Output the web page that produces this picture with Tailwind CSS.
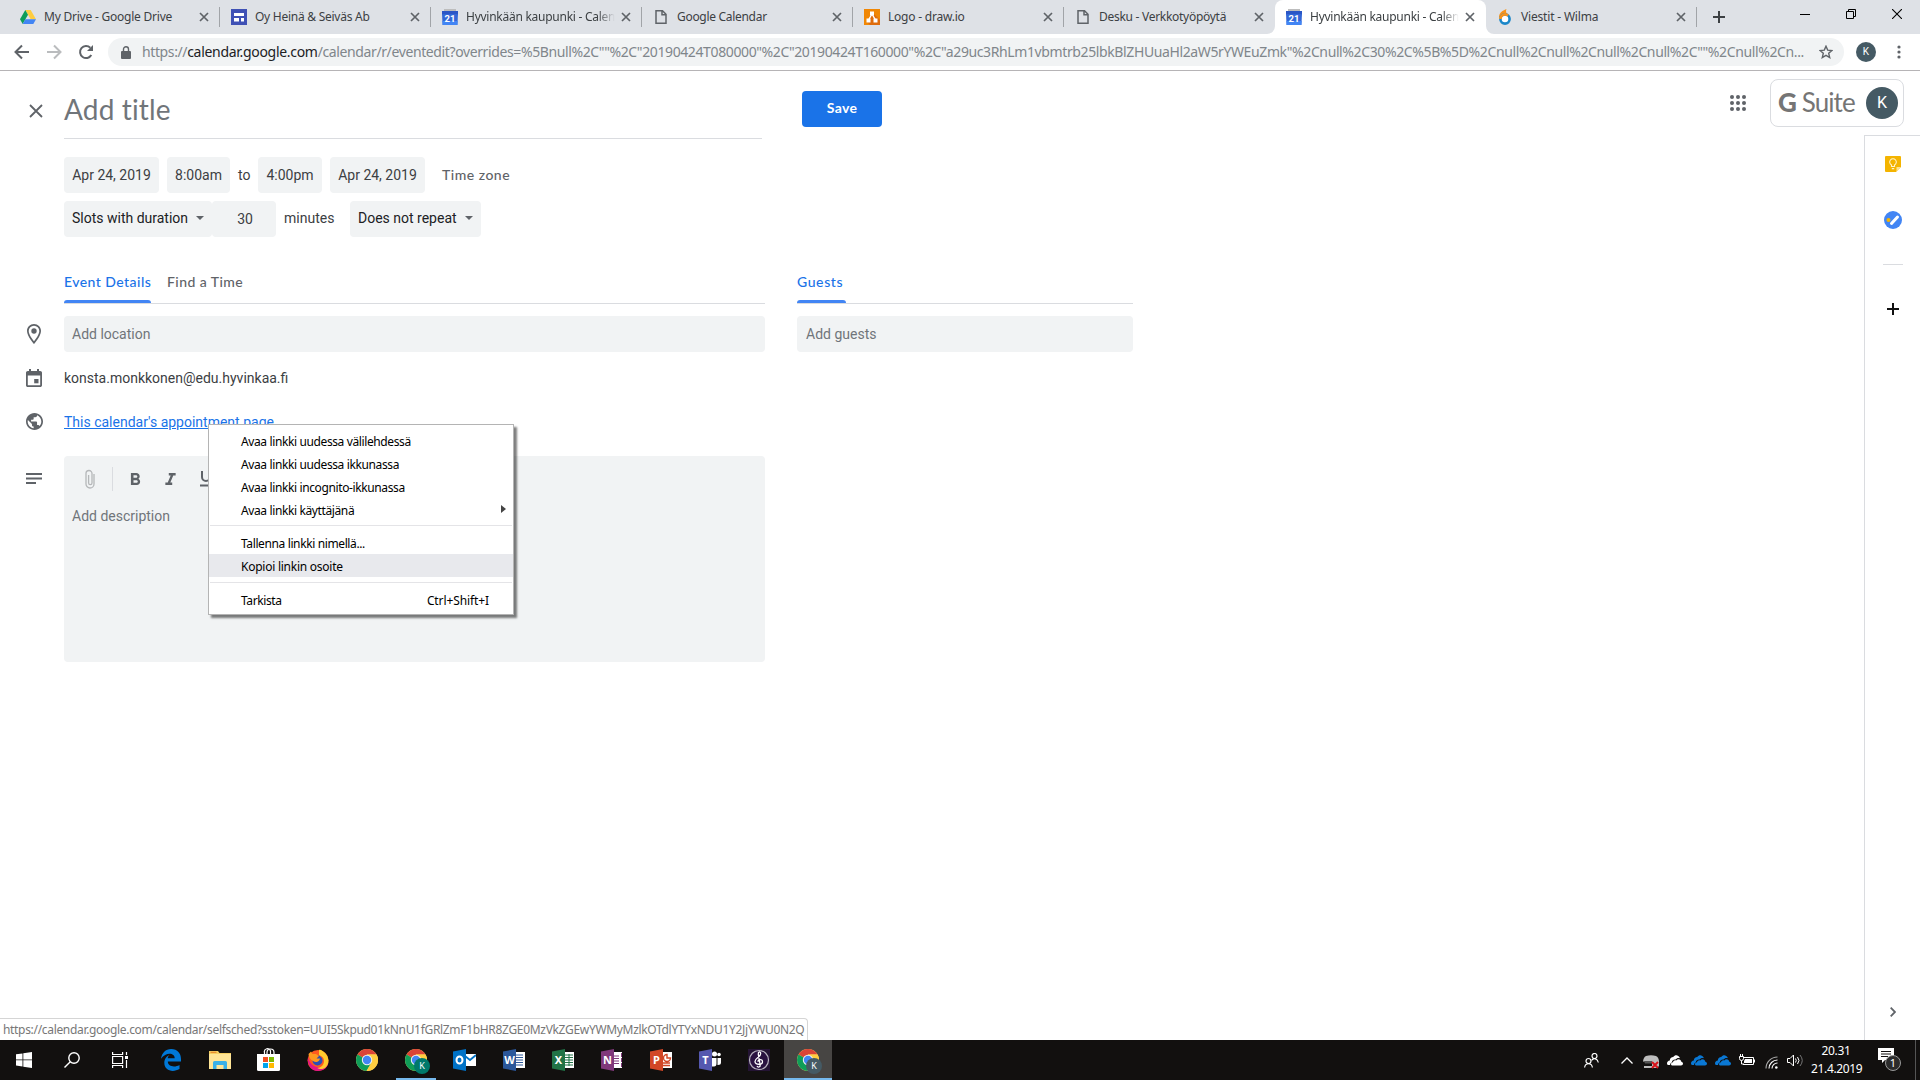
<!DOCTYPE html>
<html lang="fi">
<head>
  <meta charset="utf-8">
  <title>Hyvinkään kaupunki - Calendar</title>
  <script src="https://cdn.jsdelivr.net/npm/@tailwindcss/browser@4"></script>
</head>
<body class="h-[1080px] w-[1920px] overflow-hidden bg-white font-['Roboto','Liberation_Sans',sans-serif] text-sm text-[#3c4043]">
<!-- shared symbols -->
<svg class="hidden">
  <symbol id="x" viewBox="0 0 10 10"><path d="M1 1l8 8M9 1L1 9" fill="none" stroke="currentColor" stroke-width="1.7"/></symbol>
  <symbol id="cal" viewBox="0 0 16 16"><path d="M2 0h12v3H2z" fill="#bdbdbd"/><path d="M0 2h16v4H0z" fill="#2a56c6"/><path d="M0 5h16l-.6 11H.6z" fill="#3367d6"/><path d="M.4 12h15.2l-.2 4H.6z" fill="#4285f4"/><text x="8" y="12.6" text-anchor="middle" font-family="Roboto" font-weight="700" font-size="9.5" fill="#fff">21</text></symbol>
  <symbol id="page" viewBox="0 0 16 16"><path d="M3 1.700h6.500L13 5.200v9.100H3zM9 1.700v4h4" fill="none" stroke="#5f6368" stroke-width="1.500"/></symbol>
  <symbol id="chrome" viewBox="0 0 22 22"><circle cx="11" cy="11" r="11" fill="#fdd663"/><path d="M11 11L1.500 5.500A11 11 0 0 1 20.500 5.500H11z" fill="#db4437"/><path d="M11 11L1.500 5.500A11 11 0 0 0 10.500 22l5-8.500z" fill="#0f9d58"/><path d="M11 5.500h9.500A11 11 0 0 1 10.500 22l5.200-8.700z" fill="#ffcd40"/><circle cx="11" cy="11" r="5.200" fill="#f1f1f1"/><circle cx="11" cy="11" r="4.200" fill="#4285f4"/></symbol>
  <symbol id="cloud" viewBox="0 0 16 11"><path d="M0 8.500C0 6.800 1.200 5.600 2.800 5.500 2.800 3.300 4.300 2 6.300 2 7.300.4 9.500-.2 11.200.9c1 .6 1.500 1.500 1.700 2.400C11 2.700 9.500 3.400 8.600 4.600 6.700 4.300 5 5.500 4.800 7.400 3.600 7.800 3 8.800 3.100 10 1.300 10.400 0 9.800 0 8.500z"/><path d="M4 9.300c0-1.300.8-2 2-2.100.2-1.500 1.700-2.300 3.200-1.800 1.700-2 4.900-1.300 5.100 1.300 1.100.2 1.700.9 1.700 1.900 0 1.200-.8 1.900-2 1.900H5.800C4.800 10.500 4 10.100 4 9.300z"/></symbol>
</svg>

<!-- tab strip -->
<header class="flex h-[34px] bg-[#dee1e6] pl-[9px] font-['Noto_Sans',sans-serif] text-xs text-[#3c4043]">
  <div class="flex h-[34px] w-[211px] items-center pl-[11px]">
    <svg class="size-4" viewBox="0 0 16 16"><path d="M5.300 1h5.400l5.300 9.300h-5.300z" fill="#ffcd40"/><path d="M5.300 1L8 5.700 2.700 15 0 10.300z" fill="#0f9d58"/><path d="M5.400 10.300H16L13.300 15H2.700z" fill="#4285f4"/></svg>
    <span class="ml-2 w-[155px] whitespace-nowrap tracking-[-0.22px]">My Drive - Google Drive</span>
    <svg class="size-[10px] text-[#5f6368]"><use href="#x"/></svg>
    <i class="ml-[10px] h-5 w-px bg-[#a1a4a8]"></i>
  </div>
  <div class="flex h-[34px] w-[211px] items-center pl-[11px]">
    <svg class="size-4" viewBox="0 0 16 16"><path d="M0 0h16v16H0z" fill="#3f51b5"/><path d="M3 4h10v3H3zM3 9h5v3.500H3zM10 9h3v3.500h-3z" fill="#fff"/></svg>
    <span class="ml-2 w-[155px] whitespace-nowrap tracking-[-0.26px]">Oy Heinä &amp; Seiväs Ab</span>
    <svg class="size-[10px] text-[#5f6368]"><use href="#x"/></svg>
    <i class="ml-[10px] h-5 w-px bg-[#a1a4a8]"></i>
  </div>
  <div class="flex h-[34px] w-[211px] items-center pl-[11px]">
    <svg class="size-4"><use href="#cal"/></svg>
    <span class="ml-2 w-[155px] whitespace-nowrap tracking-[-0.26px]"><span class="mask-r-from-88%">Hyvinkään kaupunki - Calen</span></span>
    <svg class="size-[10px] text-[#5f6368]"><use href="#x"/></svg>
    <i class="ml-[10px] h-5 w-px bg-[#a1a4a8]"></i>
  </div>
  <div class="flex h-[34px] w-[211px] items-center pl-[11px]">
    <svg class="size-4"><use href="#page"/></svg>
    <span class="ml-2 w-[155px] whitespace-nowrap tracking-[-0.3px]">Google Calendar</span>
    <svg class="size-[10px] text-[#5f6368]"><use href="#x"/></svg>
    <i class="ml-[10px] h-5 w-px bg-[#a1a4a8]"></i>
  </div>
  <div class="flex h-[34px] w-[211px] items-center pl-[11px]">
    <svg class="size-4" viewBox="0 0 16 16"><path d="M0 0h16v16H0z" fill="#f08705"/><path d="M8 3l8 8v5H6l-3-3z" fill="#df6c0c"/><path d="M8 5L4.500 11M8 5l3.500 6" stroke="#fff" stroke-width="1.400"/><path d="M6 2.500h4v4H6zM2.500 9.500h4v4h-4zM9.500 9.500h4v4h-4z" fill="#fff"/></svg>
    <span class="ml-2 w-[155px] whitespace-nowrap tracking-[-0.22px]">Logo - draw.io</span>
    <svg class="size-[10px] text-[#5f6368]"><use href="#x"/></svg>
    <i class="ml-[10px] h-5 w-px bg-[#a1a4a8]"></i>
  </div>
  <div class="flex h-[34px] w-[211px] items-center pl-[11px]">
    <svg class="size-4"><use href="#page"/></svg>
    <span class="ml-2 w-[155px] whitespace-nowrap tracking-[-0.28px]">Desku - Verkkotyöpöytä</span>
    <svg class="size-[10px] text-[#5f6368]"><use href="#x"/></svg>
  </div>
  <div class="relative flex h-[34px] w-[211px] items-center rounded-t-lg bg-white pl-[11px]">
    <svg class="absolute bottom-0 -left-2 size-2" viewBox="0 0 8 8"><path d="M8 0v8H0a8 8 0 0 0 8-8z" fill="#fff"/></svg>
    <svg class="absolute -right-2 bottom-0 size-2" viewBox="0 0 8 8"><path d="M0 0v8h8a8 8 0 0 1-8-8z" fill="#fff"/></svg>
    <svg class="size-4"><use href="#cal"/></svg>
    <span class="ml-2 w-[155px] whitespace-nowrap tracking-[-0.26px]"><span class="mask-r-from-88%">Hyvinkään kaupunki - Calen</span></span>
    <svg class="size-[10px] text-[#5f6368]"><use href="#x"/></svg>
  </div>
  <div class="flex h-[34px] w-[211px] items-center pl-[11px]">
    <svg class="size-4" viewBox="0 0 16 16"><path d="M9.500 0C5 1.500 2 4.500 2 8l2 .5C5 6 8 4.500 11 5.500 9 4.500 8.500 2 9.500 0z" fill="#f7941e"/><circle cx="8" cy="10" r="4.600" fill="#fff" stroke="#1b87c9" stroke-width="2.600"/><path d="M3.400 10A4.600 4.600 0 0 1 11 6.500" fill="none" stroke="#f7941e" stroke-width="2.600"/></svg>
    <span class="ml-2 w-[155px] whitespace-nowrap tracking-[-0.18px]">Viestit - Wilma</span>
    <svg class="size-[10px] text-[#5f6368]"><use href="#x"/></svg>
    <i class="ml-[10px] h-5 w-px bg-[#a1a4a8]"></i>
  </div>
  <svg class="mt-[11px] ml-[16px] size-3" viewBox="0 0 12 12"><path d="M6 0v12M0 6h12" stroke="#3c4043" stroke-width="2"/></svg>
  <div class="mr-[18px] ml-auto flex items-start gap-9 pt-[9px]">
    <svg class="size-[10px]" viewBox="0 0 10 10"><path d="M0 5.500h10" stroke="#000"/></svg>
    <svg class="size-[10px]" viewBox="0 0 10 10"><path d="M.5 2.500h7v7h-7zM2.500 2.500v-2h7v7h-2" fill="none" stroke="#000"/></svg>
    <svg class="size-[10px]" viewBox="0 0 10 10"><path d="M0 0l10 10M10 0L0 10" stroke="#000" stroke-width="1.100"/></svg>
  </div>
</header>

<!-- toolbar -->
<nav class="flex h-[37px] items-center border-b border-[#b6b4b6] bg-white pl-[14px] text-[#5f6368]">
  <svg class="size-4" viewBox="0 0 16 16"><path d="M15 8H2M8 1.500L1.500 8 8 14.500" fill="none" stroke="currentColor" stroke-width="2"/></svg>
  <svg class="ml-4 size-4 text-[#babcbe]" viewBox="0 0 16 16"><path d="M1 8h13M8 1.500L14.500 8 8 14.500" fill="none" stroke="currentColor" stroke-width="2"/></svg>
  <svg class="ml-4 size-4" viewBox="0 0 16 16"><path d="M13.300 11A6 6 0 1 1 12.300 3.800" fill="none" stroke="currentColor" stroke-width="2"/><path d="M15 1v6H9z" fill="currentColor"/></svg>
  <div class="ml-[14px] flex h-7 w-[1736px] items-center rounded-full bg-[#f1f3f4] pl-[13px]">
    <svg class="h-[13px] w-[10px]" viewBox="0 0 10 13"><path d="M1 5h8q1 0 1 1v6q0 1-1 1H1q-1 0-1-1V6q0-1 1-1z" fill="currentColor"/><path d="M2.500 5.500V3.200a2.500 2.500 0 0 1 5 0v2.300" fill="none" stroke="currentColor" stroke-width="1.400"/></svg>
    <span class="ml-[11px] w-[1664px] whitespace-nowrap pb-px font-['Noto_Sans',sans-serif] text-sm tracking-[-0.385px] text-[#80868b]">https://<b class="font-normal tracking-[-0.3px] text-[#202124]">calendar.google.com</b>/calendar/r/eventedit?overrides=%5Bnull%2C""%2C"20190424T080000"%2C"20190424T160000"%2C"a29uc3RhLm1vbmtrb25lbkBlZHUuaHl2aW5rYWEuZmk"%2Cnull%2C30%2C%5B%5D%2Cnull%2Cnull%2Cnull%2Cnull%2C""%2Cnull%2Cn...</span>
    <svg class="ml-[13px] size-[14px]" viewBox="0 0 14 14"><path d="M7 1.200l1.700 3.900 4.200.4-3.200 2.800 1 4.200L7 10.300l-3.700 2.200 1-4.200L1.100 5.500l4.200-.4z" fill="none" stroke="currentColor" stroke-width="1.400"/></svg>
  </div>
  <span class="ml-3 flex size-5 items-center justify-center rounded-full bg-[#455a64] text-[10px] text-white">K</span>
  <svg class="ml-[21px] h-[14px] w-1" viewBox="0 0 4 14" fill="currentColor"><circle cx="2" cy="2" r="1.600"/><circle cx="2" cy="7" r="1.600"/><circle cx="2" cy="12" r="1.600"/></svg>
</nav>

<!-- page -->
<main class="flex h-[969px] pt-px">
  <section class="w-[765px] shrink-0">
    <div class="flex h-[67px] pl-[29px]">
      <svg class="mt-8 size-[14px]" viewBox="0 0 14 14"><path d="M1 1l12 12M13 1L1 13" stroke="#5f6368" stroke-width="1.800"/></svg>
      <div class="ml-[21px] h-[67px] w-[698px] border-b border-[#dadce0] pt-4 font-['Lato','Open_Sans',sans-serif] text-[28px] leading-[42px] tracking-[0.15px] text-[#70757a]">Add title</div>
    </div>
    <div class="mt-[18px] flex h-9 items-center pl-16 leading-9 whitespace-nowrap">
      <span class="w-[95px] rounded bg-[#f1f3f4] text-center">Apr 24, 2019</span>
      <span class="ml-2 w-[63px] rounded bg-[#f1f3f4] text-center">8:00am</span>
      <span class="w-7 pl-2">to</span>
      <span class="w-16 rounded bg-[#f1f3f4] text-center">4:00pm</span>
      <span class="ml-2 w-[95px] rounded bg-[#f1f3f4] text-center">Apr 24, 2019</span>
      <span class="ml-[17px] font-['Lato',sans-serif] font-medium tracking-[0.5px] text-[#5f6368]">Time zone</span>
    </div>
    <div class="mt-2 flex h-9 pl-16 leading-[34px] whitespace-nowrap">
      <span class="flex w-[148px] rounded bg-[#f1f3f4] pl-2 text-[#202124]">Slots with duration<svg class="mt-[15px] ml-2 h-1 w-2" viewBox="0 0 8 4"><path d="M0 0h8L4 4z" fill="#5f6368"/></svg></span>
      <span class="w-16 rounded bg-[#f1f3f4] pt-px pl-0.5 text-center">30</span>
      <span class="ml-2 w-[66px]">minutes</span>
      <span class="flex w-[131px] rounded bg-[#f1f3f4] pl-2 text-[#202124]">Does not repeat<svg class="mt-[15px] ml-2 h-1 w-2" viewBox="0 0 8 4"><path d="M0 0h8L4 4z" fill="#5f6368"/></svg></span>
    </div>
    <div class="mt-8 ml-16 flex h-[35px] border-b border-[#dadce0] font-['Lato',sans-serif] font-medium leading-[25px] tracking-[0.45px] text-[#5f6368]">
      <span class="relative w-[87px] whitespace-nowrap text-[#1a73e8]">Event Details<i class="absolute bottom-0 left-0 h-[3px] w-full rounded-t-sm bg-[#4285f4]"></i></span>
      <span class="ml-4">Find a Time</span>
    </div>
    <div class="mt-3 flex h-9 items-center pl-[27px]">
      <svg class="h-5 w-[14px]" viewBox="5 2 14 20"><path d="M12 2C8.130 2 5 5.130 5 9c0 5.250 7 13 7 13s7-7.750 7-13c0-3.870-3.130-7-7-7zm0 17.300C10 16.800 6.700 12.200 6.700 9a5.300 5.300 0 0 1 10.600 0c0 3.200-3.300 7.800-5.300 10.300z" fill="#5f6368"/><circle cx="12" cy="9" r="2.700" fill="#5f6368"/></svg>
      <span class="ml-[23px] h-9 w-[701px] rounded bg-[#f1f3f4] pl-2 leading-9 text-[#70757a]">Add location</span>
    </div>
    <div class="mt-2 flex h-9 items-center pl-[26px]">
      <svg class="mb-px h-[18px] w-4" viewBox="0 0 16 18"><path d="M14.200 2H13V0h-2v2H5V0H3v2H1.800C.8 2 0 2.800 0 3.800v12.400C0 17.200.8 18 1.800 18h12.400c1 0 1.800-.8 1.800-1.800V3.800c0-1-.8-1.800-1.800-1.800zm0 14.200H1.800V6.500h12.400z" fill="#5f6368"/><path d="M8.200 10h4.300v4.300H8.200z" fill="#5f6368"/></svg>
      <span class="ml-[22px]">konsta.monkkonen@edu.hyvinkaa.fi</span>
    </div>
    <div class="mt-2 flex h-9 items-center pl-[26px]">
      <svg class="mb-px size-[17px]" viewBox="2 2 20 20"><path d="M12 2C6.480 2 2 6.480 2 12s4.480 10 10 10 10-4.480 10-10S17.520 2 12 2zm-1 17.930c-3.950-.49-7-3.850-7-7.930 0-.62.08-1.210.21-1.790L9 15v1c0 1.100.9 2 2 2v1.930zm6.900-2.540c-.26-.81-1-1.390-1.900-1.390h-1v-3c0-.55-.45-1-1-1H8v-2h2c.55 0 1-.45 1-1V7h2c1.100 0 2-.9 2-2v-.41c2.930 1.190 5 4.060 5 7.410 0 2.080-.8 3.970-2.100 5.390z" fill="#5f6368"/></svg>
      <a class="ml-[21px] text-[#1a73e8] underline">This calendar's appointment page</a>
    </div>
    <div class="mt-4 flex pl-[26px]">
      <svg class="mt-[17px] h-[11px] w-4" viewBox="0 0 16 11"><path d="M0 1h16M0 5.500h16M0 10h10" stroke="#5f6368" stroke-width="1.800"/></svg>
      <div class="ml-[22px] h-[206px] w-[701px] rounded bg-[#f1f3f4] text-[#70757a]">
        <div class="flex h-[45px] items-center pl-[21px]">
          <svg class="h-5 w-[10px]" viewBox="0 0 10 20"><path d="M9 5v10a4 4 0 0 1-8 0V4.500a3 3 0 0 1 6 0V14a1.700 1.700 0 0 1-3.400 0V6" fill="none" stroke="#b5b7b9" stroke-width="1.300"/></svg>
          <i class="ml-[17px] h-6 w-px bg-[#dadce0]"></i>
          <svg class="ml-[17px] h-3 w-[11px]" viewBox="7 4 10.700 14"><path d="M15.600 10.790c.97-.67 1.650-1.770 1.650-2.790 0-2.260-1.750-4-4-4H7v14h7.040c2.090 0 3.710-1.700 3.710-3.790 0-1.520-.86-2.820-2.150-3.420zM10 6.500h3c.83 0 1.500.67 1.500 1.500s-.67 1.500-1.500 1.500h-3v-3zm3.500 9H10v-3h3.500c.83 0 1.500.67 1.500 1.500s-.67 1.500-1.500 1.500z" fill="#5f6368"/></svg>
          <svg class="ml-6 h-3 w-[11px]" viewBox="6 4 12 14"><path d="M10 4v3h2.210l-3.420 8H6v3h8v-3h-2.210l3.420-8H18V4z" fill="#5f6368"/></svg>
          <svg class="ml-6 h-4 w-3" viewBox="0 0 12 16"><path d="M2 0v6a4 4 0 0 0 8 0V0M0 14.500h12" fill="none" stroke="#5f6368" stroke-width="2"/></svg>
        </div>
        <div class="pt-[3px] pl-2 leading-6">Add description</div>
      </div>
    </div>
  </section>

  <section class="w-[368px] shrink-0 pl-8">
    <button class="mt-[19px] ml-[5px] block h-9 w-20 rounded bg-[#1a73e8] pb-0.5 font-['Lato',sans-serif] font-bold tracking-[0.3px] text-white">Save</button>
    <div class="mt-[142px] flex h-[35px] border-b border-[#dadce0] font-['Lato',sans-serif] font-medium leading-[25px] tracking-[0.6px] text-[#1a73e8]">
      <span class="relative w-[49px]">Guests<i class="absolute bottom-0 left-0 h-[3px] w-full rounded-t-sm bg-[#4285f4]"></i></span>
    </div>
    <div class="mt-3 h-9 rounded bg-[#f1f3f4] pl-[9px] leading-9 text-[#70757a]">Add guests</div>
  </section>

  <aside class="ml-auto flex w-[190px] flex-col">
    <div class="flex h-[63px] shrink-0 items-start pt-[7px]">
      <svg class="mt-4 size-4" viewBox="0 0 16 16" fill="#5f6368"><circle cx="2" cy="2" r="2"/><circle cx="8" cy="2" r="2"/><circle cx="14" cy="2" r="2"/><circle cx="2" cy="8" r="2"/><circle cx="8" cy="8" r="2"/><circle cx="14" cy="8" r="2"/><circle cx="2" cy="14" r="2"/><circle cx="8" cy="14" r="2"/><circle cx="14" cy="14" r="2"/></svg>
      <div class="ml-6 flex h-12 w-[134px] items-center rounded-lg border border-[#dadce0] pl-[7px] font-['Lato',sans-serif] text-[26px] text-[#757575]">
        <span class="w-[80px] pb-px whitespace-nowrap tracking-[-0.9px]"><b class="font-black">G</b> Suite</span>
        <span class="ml-2 flex size-8 shrink-0 items-center justify-center rounded-full bg-[#455a64] font-['Roboto'] text-base text-white">K</span>
      </div>
    </div>
    <div class="ml-[134px] flex grow flex-col items-center border-t border-l border-[#dadce0]">
      <svg class="mt-5 size-4" viewBox="0 0 16 16"><path d="M1 0h14q1 0 1 1v10l-5 5H1q-1 0-1-1V1q0-1 1-1z" fill="#f4b400"/><path d="M16 11l-4.500 4.700V11z" fill="#fde293"/><path d="M6.500 10.500V9a3.300 3.300 0 1 1 3 0v1.500zM6.800 12.600h2.400" fill="none" stroke="#fff3d0" stroke-width="1.100"/></svg>
      <svg class="mt-[39px] size-[18px]" viewBox="0 0 18 18"><circle cx="9" cy="9" r="9" fill="#4285f4"/><circle cx="4.500" cy="9" r="2" fill="#f4b400"/><path d="M7.500 12.500l6-6.500" stroke="#fff" stroke-width="3" stroke-linecap="round"/></svg>
      <i class="mt-[35px] h-px w-5 bg-[#dadce0]"></i>
      <svg class="mt-[38px] size-3" viewBox="0 0 12 12"><path d="M6 0v12M0 6h12" stroke="#111" stroke-width="2"/></svg>
      <svg class="mt-auto mb-[23px] h-[10px] w-[6px]" viewBox="0 0 6 10"><path d="M.7.700L5 5 .7 9.300" fill="none" stroke="#5f6368" stroke-width="1.800"/></svg>
    </div>
  </aside>
</main>

<!-- link status bubble -->
<div class="absolute top-[1018px] left-0 h-[22px] w-[808px] rounded-tr border-t border-r border-[#d5d5d5] bg-white pl-[3px] font-['Noto_Sans',sans-serif] text-xs leading-[22px] tracking-[-0.32px] whitespace-nowrap text-[#777]">https://calendar.google.com/calendar/selfsched?sstoken=UUI5Skpud01kNnU1fGRlZmF1bHR8ZGE0MzVkZGEwYWMyMzlkOTdlYTYxNDU1Y2JjYWU0N2Q</div>

<!-- context menu -->
<div class="absolute top-[424px] left-[208px] h-[191px] w-[306px] border border-[#b4b4b4] bg-white pt-1 font-['Noto_Sans',sans-serif] text-xs leading-[25px] tracking-[-0.38px] text-black shadow-[3px_3px_2px_rgba(0,0,0,.5)]">
  <div class="h-[23px] pl-8">Avaa linkki uudessa välilehdessä</div>
  <div class="h-[23px] pl-8">Avaa linkki uudessa ikkunassa</div>
  <div class="h-[23px] pl-8">Avaa linkki incognito-ikkunassa</div>
  <div class="flex h-[23px] justify-between pr-[7px] pl-8">Avaa linkki käyttäjänä<svg class="mt-[7px] h-2 w-[5px]" viewBox="0 0 5 8"><path d="M0 0l5 4-5 4z" fill="#444"/></svg></div>
  <hr class="mx-px mt-1 mb-[5px] border-[#e4e4e7]">
  <div class="h-[23px] pl-8">Tallenna linkki nimellä...</div>
  <div class="h-[23px] bg-[#e8e9ed] pl-8 tracking-[-0.25px]">Kopioi linkin osoite</div>
  <hr class="mx-px mt-[5px] mb-[5px] border-[#e4e4e7]">
  <div class="flex h-[23px] justify-between pr-6 pl-8"><span>Tarkista</span><span class="tracking-[-0.1px]">Ctrl+Shift+I</span></div>
</div>

<!-- taskbar -->
<footer class="flex h-10 items-center bg-[#12100f] font-['Noto_Sans',sans-serif] text-white">
  <svg class="ml-4 size-4" viewBox="0 0 16 16" fill="#fff"><path d="M0 2.300L6.500 1.400v6.100H0zM7.300 1.300L16 0v7.500H7.300zM0 8.300h6.500v6.200L0 13.600zM7.300 8.300H16V16l-8.700-1.300z"/></svg>
  <svg class="ml-8 size-4" viewBox="0 0 16 16" fill="none" stroke="#fff" stroke-width="1.400"><circle cx="10" cy="6" r="5.200"/><path d="M6.300 9.700L.5 15.500"/></svg>
  <svg class="ml-8 size-4" viewBox="0 0 16 16" fill="none" stroke="#fff" stroke-width="1.200"><path d="M.6 0v2.500h10V0M.6 4.500h10v7H.6zM.6 16v-2.500h10V16M14.500 0v3M14.500 8v8"/><path d="M13 4h3v3h-3z" fill="#fff" stroke="none"/></svg>
  <svg class="ml-[33px] h-[22px] w-5" viewBox="0 0 20 22"><path d="M0 9.800C.8 4 4.500 0 10.200 0 16.500 0 20 4.500 20 10v2.500H6.800c.2 5 6.700 6.200 11.700 3.400v4.200C12 23.700 3.300 22 3.300 13.800 3.300 10 5.500 7.200 8.500 6 7.200 7 6.800 8.300 6.700 9.300h7C13.700 3.500 4.700 3 0 9.800z" fill="#0078d7"/></svg>
  <svg class="ml-[28px] h-[18px] w-[22px]" viewBox="0 0 22 18"><path d="M0 0h9l1.500 2H22v16H0z" fill="#f5cf62"/><path d="M0 3h22v15H0z" fill="#ffe596"/><path d="M1.500.8h6v1h-6z" fill="#e67e22"/><path d="M4 18v-6.500Q4 10 5.500 10h11Q18 10 18 11.500V18h-3.500v-4h-7v4z" fill="#39b1e7"/></svg>
  <svg class="mb-0.5 ml-[26px] h-[23px] w-[23px]" viewBox="0 0 23 23"><path d="M7.500 7V4.500a3 3 0 0 1 6-1.500V7M10 7V4.500a3 3 0 0 1 7 0V7" fill="none" stroke="#fff" stroke-width="1.200"/><path d="M0 6h23v15.500Q23 23 21.500 23h-20Q0 23 0 21.500z" fill="#fff"/><path d="M6 9h5v5H6z" fill="#f25022"/><path d="M12 9h5v5h-5z" fill="#7fba00"/><path d="M6 15h5v5H6z" fill="#00a4ef"/><path d="M12 15h5v5h-5z" fill="#ffb900"/></svg>
  <svg class="ml-[27px] size-[22px]" viewBox="0 0 22 22"><circle cx="11" cy="11.500" r="10.500" fill="#ff5a1f"/><path d="M1 8C0 14 3 22 11 22c6 0 10-4 10.500-9C19 18 14 19.500 10 18 5 17 2 13 1 8z" fill="#e31587"/><path d="M12 1c2-1 3 1 5 2 5 4 6 11 2 15-3 3-7 2-9 1 4 0 7-3 7-7s-3-5-5-6z" fill="#ffcb2d"/><circle cx="10.500" cy="11.500" r="5" fill="#2d4fb5"/><path d="M1.500 5L4 2.500 5.500 5H9l3 2-2.500 2.500h3.500C12.500 13 9 14 6 12 3 10.500 2 8 1.500 5z" fill="#ff9a1f"/></svg>
  <svg class="ml-[27px] size-[22px]"><use href="#chrome"/></svg>
  <div class="relative ml-[18px] flex h-10 w-10 items-center justify-center border-b-2 border-[#76b9ed]">
    <svg class="mt-0.5 size-[22px]"><use href="#chrome"/></svg>
    <span class="absolute top-[18px] left-[18px] flex size-4 items-center justify-center rounded-full bg-[#00796b] text-[9px] text-white">K</span>
  </div>
  <svg class="ml-[17px] h-[22px] w-[23px]" viewBox="0 0 23 22"><path d="M11 5h12v12H11z" fill="#fff"/><path d="M12 7l5 4 6-5" fill="none" stroke="#0072c6" stroke-width="1.800"/><path d="M0 2.500L13 0v22L0 19.500z" fill="#0072c6"/><ellipse cx="6.500" cy="11" rx="3" ry="3.600" fill="none" stroke="#fff" stroke-width="2"/></svg>
  <svg class="ml-[27px] h-[22px] w-[22px]" viewBox="0 0 22 22"><path d="M12 3h10v16H12z" fill="#fff"/><path d="M13 6h7M13 8.500h7M13 11h7M13 13.500h7M13 16h7" stroke="#2b579a"/><path d="M0 2.500L13 0v22L0 19.500z" fill="#2b579a"/><text x="6.500" y="15" text-anchor="middle" font-size="11" font-weight="700" fill="#fff">W</text></svg>
  <svg class="ml-[27px] h-[22px] w-[22px]" viewBox="0 0 22 22"><path d="M12 3h10v16H12z" fill="#fff"/><path d="M13 6h8M13 8.500h8M13 11h8M13 13.500h8M13 16h8M17 5v12" stroke="#217346"/><path d="M0 2.500L13 0v22L0 19.500z" fill="#217346"/><text x="6.500" y="15" text-anchor="middle" font-size="11" font-weight="700" fill="#fff">X</text></svg>
  <svg class="ml-[27px] h-[22px] w-[22px]" viewBox="0 0 22 22"><path d="M12 3h9v16h-9z" fill="#fff"/><path d="M13 7h5M13 9.500h5M13 12h5M13 14.500h5M20.500 4v4M20.500 9v4M20.500 14v4" stroke="#80397b"/><path d="M0 2.500L13 0v22L0 19.500z" fill="#80397b"/><text x="6.500" y="15" text-anchor="middle" font-size="11" font-weight="700" fill="#fff">N</text></svg>
  <svg class="ml-[27px] h-[22px] w-[22px]" viewBox="0 0 22 22"><path d="M12 3h10v16H12z" fill="#fff"/><path d="M13 14h7M13 16.500h7M17 5.500v3.500h3.500A3.500 3.500 0 1 1 17 5.500z" fill="none" stroke="#d24726" stroke-width="1.400"/><path d="M0 2.500L13 0v22L0 19.500z" fill="#d24726"/><text x="6.500" y="15" text-anchor="middle" font-size="11" font-weight="700" fill="#fff">P</text></svg>
  <svg class="ml-[27px] h-[22px] w-[22px]" viewBox="0 0 22 22"><circle cx="15.500" cy="5" r="2.500" fill="#fff"/><circle cx="20" cy="5.500" r="1.800" fill="#fff"/><path d="M12 9h5.500v5.500q0 3-2.500 3h-3zM18.500 9H22v4.500q0 2.500-3 2.500h-.5z" fill="#fff"/><path d="M0 2.500L13 0v22L0 19.500z" fill="#5558af"/><text x="6.500" y="15" text-anchor="middle" font-size="11" font-weight="700" fill="#fff">T</text></svg>
  <svg class="ml-[27px] size-[22px]" viewBox="0 0 22 22"><path d="M0 0h22v22H0z" fill="#241434"/><circle cx="11" cy="11" r="9.500" fill="#2a1240" stroke="#b9b4c0" stroke-width="1.200"/><path d="M9 17c1 2 3.500 1 3.200-1L10.300 5.500C10 2.500 12.500 2 12.700 4.500 13 8 7 9 7 12.500c0 3.800 7.500 3.500 7.500.2 0-3-4.500-2.700-4.500 0" fill="none" stroke="#fff" stroke-width="1.300"/></svg>
  <div class="relative ml-[14px] flex h-10 w-12 items-center justify-center border-b-2 border-[#76b9ed] bg-[#474543]">
    <svg class="mt-0.5 size-[22px]"><use href="#chrome"/></svg>
    <span class="absolute top-[18px] left-[22px] flex size-4 items-center justify-center rounded-full bg-[#455a64] text-[9px] text-white">K</span>
  </div>

  <!-- tray -->
  <div class="mr-[4px] ml-auto flex items-center">
    <svg class="size-[15px]" viewBox="0 0 15 15" fill="none" stroke="#fff" stroke-width="1.200"><circle cx="10.500" cy="3" r="2.500"/><path d="M7.500 7.500c2-3 6.200-2 6.800 2"/><circle cx="4.500" cy="8" r="2.500"/><path d="M.6 14.500c.6-5 7.200-5 7.800 0"/></svg>
    <svg class="ml-[22px] h-[7px] w-3" viewBox="0 0 12 7"><path d="M.5 6.500L6 1l5.500 5.500" fill="none" stroke="#fff" stroke-width="1.300"/></svg>
    <svg class="mt-[3px] ml-[10px] h-[14px] w-4" viewBox="0 0 16 14"><path d="M3 1Q8-.5 13 1q2.500 1 3 5v5l-2 2H1v-2h8V8L0 6.500Q.5 2 3 1z" fill="#bdbdbd"/><path d="M1 6h8v2.500H2z" fill="#555"/><path d="M9 7l6 6M15 7l-6 6" stroke="#d8131b" stroke-width="2"/></svg>
    <svg class="ml-2 h-[11px] w-4" fill="#fff"><use href="#cloud"/></svg>
    <svg class="ml-2 h-[11px] w-4" fill="#0a78d4"><use href="#cloud"/></svg>
    <svg class="ml-2 h-[11px] w-4" fill="#0a78d4"><use href="#cloud"/></svg>
    <svg class="ml-2 h-[12px] w-4" viewBox="0 0 16 12" fill="none" stroke="#fff"><path d="M5 3.500h9.500v7H4M.5 2.500h4v2q0 2-2 2t-2-2zM1.500 0v2.500M3.500 0v2.500M2.500 6.500V10H5M15.500 5.500v3"/><path d="M6 5h7v4H5V7z" fill="#fff" stroke="none"/></svg>
    <svg class="mt-1 ml-[10px] size-[13px]" viewBox="0 0 13 13" fill="none" stroke="#fff" stroke-width="1.100"><path d="M1 12.500A11.500 11.500 0 0 1 12.500 1" stroke="#aaa"/><path d="M4 12.500A8.500 8.500 0 0 1 12.500 4M7 12.500A5.500 5.500 0 0 1 12.500 7"/><circle cx="11.300" cy="11.500" r="1.300" fill="#fff" stroke="none"/></svg>
    <svg class="ml-[9px] h-[13px] w-4" viewBox="0 0 16 13" fill="none" stroke="#fff"><path d="M.5 4.500H3L6.500 1v11L3 8.500H.5zM8.500 4.500q1.500 2 0 4M10.500 3q3 3.500 0 7"/><path d="M13 1q4.500 5.500 0 11" stroke="#777"/></svg>
    <div class="ml-[8px] w-[50px] text-center text-xs leading-[18px] tracking-[-0.35px]">20.31<br>21.4.2019</div>
    <div class="relative ml-[17px] h-6 w-6">
      <svg class="h-[15px] w-4" viewBox="0 0 16 15"><path d="M0 0h16v12h-9l-3 3v-3H0z" fill="#fff"/><path d="M3 3.500h10M3 6h10M3 8.500h7" stroke="#12100f"/></svg>
      <span class="absolute top-[7px] left-[7px] flex size-4 items-center justify-center rounded-full border border-[#999] bg-[#2b2b2b] text-[11px] text-white">1</span>
    </div>
    <i class="ml-[13px] h-10 w-px bg-[#555]"></i>
  </div>
</footer>
</body>
</html>
